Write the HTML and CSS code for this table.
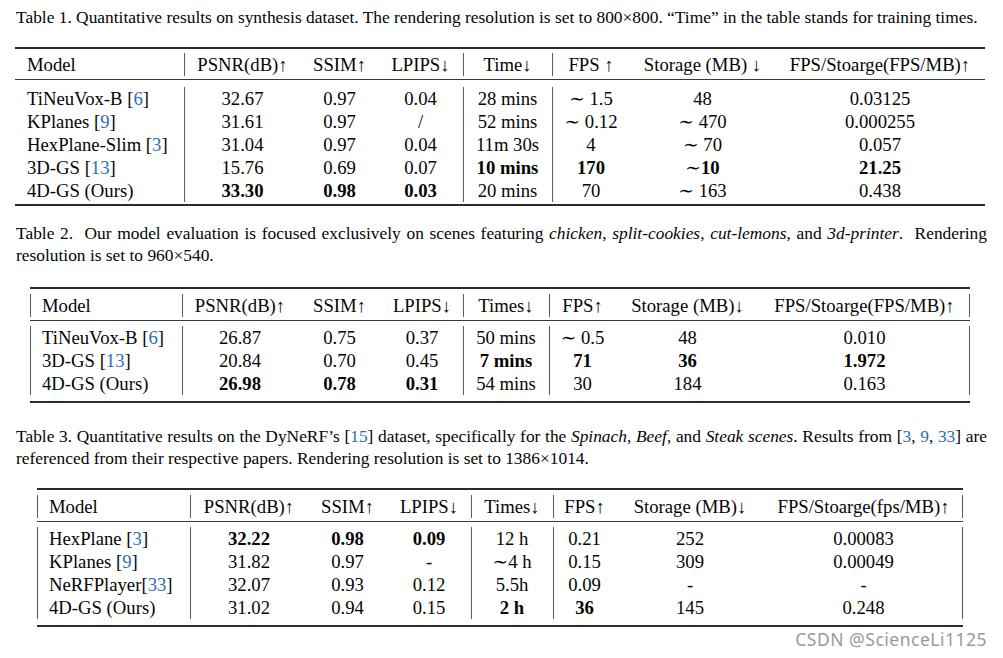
FILE: index.html
```html
<!DOCTYPE html>
<html>
<head>
<meta charset="utf-8">
<link rel="stylesheet" href="styles.css">
</head>
<body>
<div class="page">
  <p class="cap cap1">Table 1. Quantitative results on synthesis dataset. The rendering resolution is set to 800×800. “Time” in the table stands for training times.</p>
  <table class="t t1">
    <colgroup><col><col><col><col><col><col><col><col></colgroup>
    <tr class="gap"><td colspan="8"></td></tr>
    <tr class="hd">
      <td class="m">Model</td><td class="s">PSNR(dB)↑</td><td>SSIM↑</td><td>LPIPS↓</td><td class="s">Time↓</td><td class="s">FPS ↑</td><td>Storage (MB) ↓</td><td>FPS/Stoarge(FPS/MB)↑</td>
    </tr>
    <tr class="mid"><td colspan="8"></td></tr>
    <tr><td class="m">TiNeuVox-B <span class="ref">[<a>6</a>]</span></td><td class="s">32.67</td><td>0.97</td><td>0.04</td><td class="s">28 mins</td><td class="s">∼ 1.5</td><td>48</td><td>0.03125</td></tr>
    <tr><td class="m">KPlanes <span class="ref">[<a>9</a>]</span></td><td class="s">31.61</td><td>0.97</td><td>/</td><td class="s">52 mins</td><td class="s">∼ 0.12</td><td>∼ 470</td><td>0.000255</td></tr>
    <tr><td class="m">HexPlane-Slim <span class="ref">[<a>3</a>]</span></td><td class="s">31.04</td><td>0.97</td><td>0.04</td><td class="s">11m 30s</td><td class="s">4</td><td>∼ 70</td><td>0.057</td></tr>
    <tr><td class="m">3D-GS <span class="ref">[<a>13</a>]</span></td><td class="s">15.76</td><td>0.69</td><td>0.07</td><td class="s"><b>10 mins</b></td><td class="s"><b>170</b></td><td>∼<b>10</b></td><td><b>21.25</b></td></tr>
    <tr><td class="m">4D-GS (Ours)</td><td class="s"><b>33.30</b></td><td><b>0.98</b></td><td><b>0.03</b></td><td class="s">20 mins</td><td class="s">70</td><td>∼ 163</td><td>0.438</td></tr>
    <tr class="gapb"><td colspan="8"></td></tr>
  </table>

  <p class="cap cap2"><span class="ln first">Table 2.&nbsp; Our model evaluation is focused exclusively on scenes featuring <i>chicken</i>, <i>split-cookies</i>, <i>cut-lemons</i>, and <i>3d-printer</i>.&nbsp; Rendering</span><span class="ln">resolution is set to 960×540.</span></p>
  <table class="t t2 boxed">
    <colgroup><col><col><col><col><col><col><col><col></colgroup>
    <tr class="gap"><td colspan="8"></td></tr>
    <tr class="hd">
      <td class="m l">Model</td><td class="s">PSNR(dB)↑</td><td>SSIM↑</td><td>LPIPS↓</td><td class="s">Times↓</td><td class="s">FPS↑</td><td>Storage (MB)↓</td><td class="r">FPS/Stoarge(FPS/MB)↑</td>
    </tr>
    <tr class="mid"><td colspan="8"></td></tr>
    <tr><td class="m l">TiNeuVox-B <span class="ref">[<a>6</a>]</span></td><td class="s">26.87</td><td>0.75</td><td>0.37</td><td class="s">50 mins</td><td class="s">∼ 0.5</td><td>48</td><td class="r">0.010</td></tr>
    <tr><td class="m l">3D-GS <span class="ref">[<a>13</a>]</span></td><td class="s">20.84</td><td>0.70</td><td>0.45</td><td class="s"><b>7 mins</b></td><td class="s"><b>71</b></td><td><b>36</b></td><td class="r"><b>1.972</b></td></tr>
    <tr><td class="m l">4D-GS (Ours)</td><td class="s"><b>26.98</b></td><td><b>0.78</b></td><td><b>0.31</b></td><td class="s">54 mins</td><td class="s">30</td><td>184</td><td class="r">0.163</td></tr>
    <tr class="gapb"><td colspan="8"></td></tr>
  </table>

  <p class="cap cap3"><span class="ln first">Table 3. Quantitative results on the DyNeRF’s <span class="ref">[<a>15</a>]</span> dataset, specifically for the <i>Spinach</i>, <i>Beef</i>, and <i>Steak scenes</i>. Results from <span class="ref">[<a>3</a>, <a>9</a>, <a>33</a>]</span> are</span><span class="ln">referenced from their respective papers. Rendering resolution is set to 1386×1014.</span></p>
  <table class="t t3 boxed">
    <colgroup><col><col><col><col><col><col><col><col></colgroup>
    <tr class="gap"><td colspan="8"></td></tr>
    <tr class="hd">
      <td class="m l">Model</td><td class="s">PSNR(dB)↑</td><td>SSIM↑</td><td>LPIPS↓</td><td class="s">Times↓</td><td class="s">FPS↑</td><td>Storage (MB)↓</td><td class="r">FPS/Stoarge(fps/MB)↑</td>
    </tr>
    <tr class="mid"><td colspan="8"></td></tr>
    <tr><td class="m l">HexPlane <span class="ref">[<a>3</a>]</span></td><td class="s"><b>32.22</b></td><td><b>0.98</b></td><td><b>0.09</b></td><td class="s">12 h</td><td class="s">0.21</td><td>252</td><td class="r">0.00083</td></tr>
    <tr><td class="m l">KPlanes <span class="ref">[<a>9</a>]</span></td><td class="s">31.82</td><td>0.97</td><td>-</td><td class="s">∼4 h</td><td class="s">0.15</td><td>309</td><td class="r">0.00049</td></tr>
    <tr><td class="m l">NeRFPlayer<span class="ref">[<a>33</a>]</span></td><td class="s">32.07</td><td>0.93</td><td>0.12</td><td class="s">5.5h</td><td class="s">0.09</td><td>-</td><td class="r">-</td></tr>
    <tr><td class="m l">4D-GS (Ours)</td><td class="s">31.02</td><td>0.94</td><td>0.15</td><td class="s"><b>2 h</b></td><td class="s"><b>36</b></td><td>145</td><td class="r">0.248</td></tr>
    <tr class="gapb"><td colspan="8"></td></tr>
  </table>

  <div class="wm">CSDN @ScienceLi1125</div>
</div>
</body>
</html>
```

FILE: styles.css
```css
html, body {
  margin: 0;
  padding: 0;
  background: #ffffff;
}

.page {
  padding: 6px 16px 0 16px;
  font-family: "Liberation Serif", "DejaVu Serif", serif;
  color: #050505;
}

.cap {
  margin: 0;
  width: 971px;
  font-size: 17.4px;
  line-height: 22px;
  text-align: justify;
}

.cap .ln {
  display: block;
  white-space: nowrap;
}

.cap .ln.first {
  white-space: normal;
  text-align: justify;
  text-align-last: justify;
}

.cap1 { margin-bottom: 19px; }
.cap2 { margin-top: 16px; margin-bottom: 21px; }
.cap3 { margin-top: 22px; margin-bottom: 19px; }

.ref a { color: #2f6db5; }

.t {
  border-collapse: separate;
  border-spacing: 0;
  table-layout: fixed;
  border-top: 2px solid #2b2b2b;
  border-bottom: 2px solid #2b2b2b;
  font-size: 18.7px;
  white-space: nowrap;
}

.t td {
  padding: 0;
  height: 23px;
  line-height: 23px;
  text-align: center;
}

.t td.m {
  text-align: left;
  padding-left: 12px;
}

.t td.s {
  box-shadow: inset 1px 0 #5a5a5a;
}

.boxed td.l {
  box-shadow: inset 1px 0 #5a5a5a;
}

.boxed td.r {
  box-shadow: inset -1px 0 #5a5a5a;
}

.t tr.gap td { height: 4px; line-height: 0; box-shadow: none; }
.t tr.gapb td { height: 2px; line-height: 0; box-shadow: none; }

.t tr.mid td {
  height: 11px;
  line-height: 0;
  background: linear-gradient(#3a3a3a, #3a3a3a) 0 3px / 100% 1px no-repeat;
}

.t2 tr.gap td, .t3 tr.gap td { height: 5px; }
.t2 tr.mid td, .t3 tr.mid td { height: 9px; }
.t2 tr.gapb td { height: 6px; }
.t3 tr.gapb td { height: 6px; }

/* table 1 geometry */
.t1 { width: 970px; margin-left: -1px; }
.t1 col:nth-child(1) { width: 169px; }
.t1 col:nth-child(2) { width: 117px; }
.t1 col:nth-child(3) { width: 77px; }
.t1 col:nth-child(4) { width: 85px; }
.t1 col:nth-child(5) { width: 89px; }
.t1 col:nth-child(6) { width: 78px; }
.t1 col:nth-child(7) { width: 145px; }
.t1 col:nth-child(8) { width: 210px; }

/* table 2 geometry */
.t2 { width: 940px; margin-left: 14px; }
.t2 col:nth-child(1) { width: 152px; }
.t2 col:nth-child(2) { width: 116px; }
.t2 col:nth-child(3) { width: 83px; }
.t2 col:nth-child(4) { width: 82px; }
.t2 col:nth-child(5) { width: 86px; }
.t2 col:nth-child(6) { width: 67px; }
.t2 col:nth-child(7) { width: 143px; }
.t2 col:nth-child(8) { width: 211px; }

/* table 3 geometry */
.t3 { width: 926px; margin-left: 21px; }
.t3 col:nth-child(1) { width: 153px; }
.t3 col:nth-child(2) { width: 118px; }
.t3 col:nth-child(3) { width: 79px; }
.t3 col:nth-child(4) { width: 84px; }
.t3 col:nth-child(5) { width: 82px; }
.t3 col:nth-child(6) { width: 63px; }
.t3 col:nth-child(7) { width: 148px; }
.t3 col:nth-child(8) { width: 199px; }

.wm {
  width: 971px;
  margin-top: 2px;
  text-align: right;
  font-family: "Noto Sans", "DejaVu Sans", sans-serif;
  font-size: 17.5px;
  letter-spacing: 0.5px;
  line-height: 20px;
  color: #9a9a9a;
}
```
